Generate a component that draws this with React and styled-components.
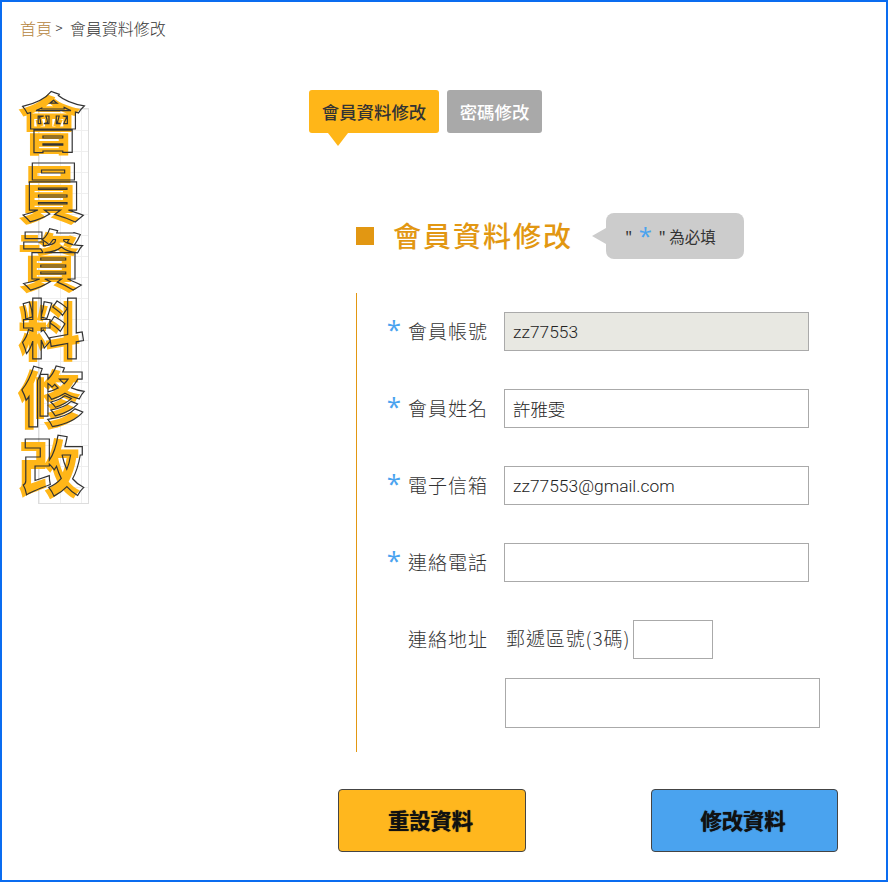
import React from "react";
import styled, { createGlobalStyle } from "styled-components";

const CJK = `"Noto Sans CJK TC", "Noto Sans", sans-serif`;
const LATIN = `Roboto, "Noto Sans CJK TC", sans-serif`;

const Global = createGlobalStyle`
  html, body { margin: 0; padding: 0; background: #fff; }
  * { box-sizing: border-box; }
  body { font-family: ${LATIN}; color: #333; }
`;

const Page = styled.div`
  width: 888px;
  height: 882px;
  border: 2px solid #0a6cf0;
  padding: 14px 0 0 18px;
  overflow: hidden;
`;
const Crumbs = styled.nav`
  display: flex;
  align-items: center;
  height: 24px;
  font-size: 16px;
  color: #333;
  font-family: ${CJK};
  font-weight: 300;
`;
const CrumbHome = styled.span` color: #b5843c; `;
const CrumbSep = styled.span` font-family: ${LATIN}; margin: 0 7px 0 3px; font-size: 15px; `;
const Layout = styled.div`
  display: grid;
  grid-template-columns: 289px 1fr;
  margin-top: 50px;
`;
const TitleCol = styled.div`
  position: relative;
`;
const GridBack = styled.div`
  position: absolute;
  left: 18px;
  top: 18px;
  width: 51px;
  height: 396px;
  border: 1px solid #ddd;
  background-image:
    linear-gradient(#efefef 1px, transparent 1px),
    linear-gradient(90deg, #efefef 1px, transparent 1px);
  background-size: 21px 21px;
`;
const VerticalTitle = styled.h1`
  position: relative;
  isolation: isolate;
  margin: -5px 0 0;
  width: 66px;
  font-family: ${CJK};
  font-weight: 900;
  font-size: 63px;
  line-height: 68.5px;
  text-align: center;
  color: transparent;
  -webkit-text-stroke: 1.2px #333;
  &::before {
    content: attr(data-shade);
    position: absolute;
    z-index: -1;
    left: -4px;
    top: 3px;
    width: 66px;
    color: #ffb618;
    -webkit-text-stroke: 0;
  }
`;
const Main = styled.div`
  display: flex;
  flex-direction: column;
`;
const Tabs = styled.div`
  display: flex;
  gap: 8px;
  height: 43px;
`;
const Tab = styled.div`
  position: relative;
  display: flex;
  align-items: center;
  justify-content: center;
  width: ${p => p.$w}px;
  border-radius: 3px;
  background: ${p => (p.$active ? "#ffb618" : "#a9a9a9")};
  color: ${p => (p.$active ? "#333" : "#fff")};
  font-family: ${CJK};
  font-weight: 500;
  font-size: 17.4px;
  padding-bottom: 1px;
  ${p => p.$active && `
    &::after {
      content: "";
      position: absolute;
      left: 19px;
      bottom: -13px;
      border-left: 10px solid transparent;
      border-right: 10px solid transparent;
      border-top: 13px solid #ffb618;
    }
  `}
`;
const Heading = styled.div`
  display: flex;
  align-items: center;
  margin: 80px 0 0 47px;
  height: 46px;
`;
const Square = styled.span`
  width: 18px;
  height: 18px;
  background: #e29712;
`;
const HeadingText = styled.h2`
  margin: 0 0 2px 19px;
  font-family: ${CJK};
  font-weight: 500;
  font-size: 28px;
  letter-spacing: 2px;
  color: #e29712;
`;
const Bubble = styled.div`
  position: relative;
  margin-left: 33px;
  width: 138px;
  height: 46px;
  border-radius: 8px;
  background: #ccc;
  display: flex;
  align-items: center;
  padding-left: 19px;
  font-family: ${CJK};
  font-size: 15.5px;
  color: #333;
  white-space: pre;
  &::before {
    content: "";
    position: absolute;
    left: -14px;
    top: 15px;
    border-top: 8px solid transparent;
    border-bottom: 8px solid transparent;
    border-right: 14px solid #ccc;
  }
`;
const Star = styled.span`
  color: #4aa3ef;
  font-family: "Open Sans", sans-serif;
  font-size: ${p => p.$size || 22}px;
  line-height: 1;
  margin: ${p => p.$gap || "0"};
`;
const Form = styled.div`
  margin: 34px 0 0 47px;
  height: 459px;
  border-left: 1px solid #e29712;
  padding-top: 19px;
  display: flex;
  flex-direction: column;
`;
const Row = styled.div`
  display: grid;
  grid-template-columns: 51px 96px 1fr;
  height: 39px;
  margin-bottom: 38px;
  align-items: center;
`;
const StarCell = styled.div`
  display: flex;
  justify-content: flex-end;
  padding: 0 7px 5px 0;
  height: 100%;
  align-items: center;
`;
const Label = styled.label`
  font-family: ${CJK};
  font-weight: 300;
  font-size: 19px;
  letter-spacing: 1px;
  color: #333;
  white-space: nowrap;
  padding-bottom: 3px;
`;
const Field = styled.div`
  display: flex;
  align-items: center;
  flex: none;
  width: ${p => p.$w || 305}px;
  height: ${p => p.$h || 39}px;
  border: 1px solid #aaa;
  background: ${p => (p.$off ? "#e8e8e2" : "#fff")};
  padding-left: 8px;
  font-size: 17.4px;
  font-weight: 300;
  color: #222;
  font-family: ${LATIN};
`;
const ZipWrap = styled.div`
  display: flex;
  align-items: center;
  padding-left: 2px;
  font-family: ${CJK};
  font-weight: 300;
  font-size: 19px;
  letter-spacing: 0.9px;
  gap: 4px;
  white-space: nowrap;
`;
const ZipLabel = styled.span`
  width: 123px;
  padding-bottom: 5px;
`;
const AddressRow = styled.div`
  margin: -19px 0 0 148px;
`;
const Buttons = styled.div`
  display: flex;
  margin: 37px 0 0 29px;
  gap: 125px;
`;
const Button = styled.button`
  width: ${p => p.$w}px;
  height: 63px;
  border: 1px solid #444;
  border-radius: 4px;
  background: ${p => p.$bg};
  font-family: ${CJK};
  font-weight: 700;
  font-size: 21.3px;
  color: #111;
  text-shadow: 0 0 1px #111;
  padding: 0 3px 3px 0;
`;

const TITLE = "會員資料修改";

export default function App() {
  return (
    <Page>
      <Global />
      <Crumbs>
        <CrumbHome>首頁</CrumbHome>
        <CrumbSep>&gt;</CrumbSep>
        會員資料修改
      </Crumbs>
      <Layout>
        <TitleCol>
          <GridBack />
          <VerticalTitle data-shade={TITLE}>{TITLE}</VerticalTitle>
        </TitleCol>
        <Main>
          <Tabs>
            <Tab $active $w={130}>會員資料修改</Tab>
            <Tab $w={95}>密碼修改</Tab>
          </Tabs>
          <Heading>
            <Square />
            <HeadingText>會員資料修改</HeadingText>
            <Bubble>" <Star $size={24} $gap="0 3px">*</Star> " 為必填</Bubble>
          </Heading>
          <Form>
            <Row>
              <StarCell><Star $size={26}>*</Star></StarCell>
              <Label>會員帳號</Label>
              <Field $off>zz77553</Field>
            </Row>
            <Row>
              <StarCell><Star $size={26}>*</Star></StarCell>
              <Label>會員姓名</Label>
              <Field>許雅雯</Field>
            </Row>
            <Row>
              <StarCell><Star $size={26}>*</Star></StarCell>
              <Label>電子信箱</Label>
              <Field>zz77553@gmail.com</Field>
            </Row>
            <Row>
              <StarCell><Star $size={26}>*</Star></StarCell>
              <Label>連絡電話</Label>
              <Field />
            </Row>
            <Row>
              <StarCell />
              <Label>連絡地址</Label>
              <ZipWrap><ZipLabel>郵遞區號(3碼)</ZipLabel><Field $w={80} /></ZipWrap>
            </Row>
            <AddressRow><Field $w={315} $h={50} /></AddressRow>
          </Form>
          <Buttons>
            <Button $w={188} $bg="#ffb71e">重設資料</Button>
            <Button $w={187} $bg="#4aa3ef">修改資料</Button>
          </Buttons>
        </Main>
      </Layout>
    </Page>
  );
}
